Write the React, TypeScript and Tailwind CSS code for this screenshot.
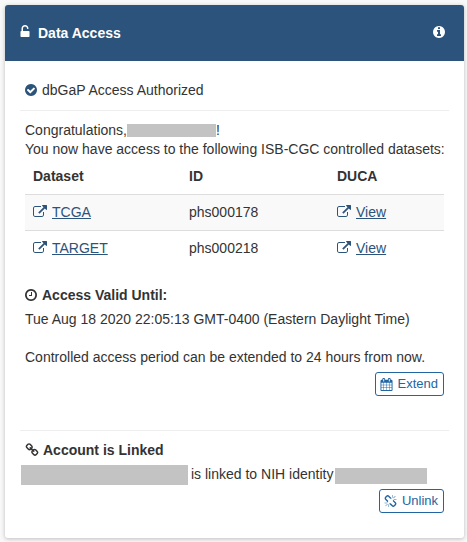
import type { ReactNode } from "react";

const ICONS = {
  unlock:
    "M1376 768q40 0 68 28t28 68v576q0 40-28 68t-68 28h-960q-40 0-68-28t-28-68v-576q0-40 28-68t68-28h32v-320q0-185 131.5-316.5t316.5-131.5 316.5 131.5 131.5 316.5q0 26-19 45t-45 19h-64q-26 0-45-19t-19-45q0-106-75-181t-181-75-181 75-75 181v320h736z",
  info: "M1152 1376v-160q0-14-9-23t-23-9h-96v-512q0-14-9-23t-23-9h-320q-14 0-23 9t-9 23v160q0 14 9 23t23 9h96v320h-96q-14 0-23 9t-9 23v160q0 14 9 23t23 9h448q14 0 23-9t9-23zm-128-896v-160q0-14-9-23t-23-9h-192q-14 0-23 9t-9 23v160q0 14 9 23t23 9h192q14 0 23-9t9-23zm640 416q0 209-103 385.5t-279.5 279.5-385.5 103-385.5-103-279.5-279.5-103-385.5 103-385.5 279.5-279.5 385.5-103 385.5 103 279.5 279.5 103 385.5z",
  check:
    "M1412 734q0-28-18-46l-91-90q-19-19-45-19t-45 19l-408 407-226-226q-19-19-45-19t-45 19l-91 90q-18 18-18 46 0 27 18 45l362 362q19 19 45 19 27 0 46-19l543-543q18-18 18-45zm252 162q0 209-103 385.5t-279.5 279.5-385.5 103-385.5-103-279.5-279.5-103-385.5 103-385.5 279.5-279.5 385.5-103 385.5 103 279.5 279.5 103 385.5z",
  external:
    "M1408 928v320q0 119-84.5 203.5t-203.5 84.5h-832q-119 0-203.5-84.5t-84.5-203.5v-832q0-119 84.5-203.5t203.5-84.5h704q14 0 23 9t9 23v64q0 14-9 23t-23 9h-704q-66 0-113 47t-47 113v832q0 66 47 113t113 47h832q66 0 113-47t47-113v-320q0-14 9-23t23-9h64q14 0 23 9t9 23zm384-864v512q0 26-19 45t-45 19-45-19l-176-176-652 652q-10 10-23 10t-23-10l-114-114q-10-10-10-23t10-23l652-652-176-176q-19-19-19-45t19-45 45-19h512q26 0 45 19t19 45z",
  clock:
    "M1024 544v448q0 14-9 23t-23 9h-320q-14 0-23-9t-9-23v-64q0-14 9-23t23-9h224v-352q0-14 9-23t23-9h64q14 0 23 9t9 23zm416 352q0-148-73-273t-198-198-273-73-273 73-198 198-73 273 73 273 198 198 273 73 273-73 198-198 73-273zm224 0q0 209-103 385.5t-279.5 279.5-385.5 103-385.5-103-279.5-279.5-103-385.5 103-385.5 279.5-279.5 385.5-103 385.5 103 279.5 279.5 103 385.5z",
  calendar:
    "M192 1664h288v-288h-288v288zm352 0h320v-288h-320v288zm-352-352h288v-320h-288v320zm352 0h320v-320h-320v320zm-352-384h288v-288h-288v288zm736 736h320v-288h-320v288zm-384-736h320v-288h-320v288zm768 736h288v-288h-288v288zm-384-352h320v-320h-320v320zm-352-864v-288q0-13-9.5-22.5t-22.5-9.5h-64q-13 0-22.5 9.5t-9.5 22.5v288q0 13 9.5 22.5t22.5 9.5h64q13 0 22.5-9.5t9.5-22.5zm736 864h288v-320h-288v320zm-384-384h320v-288h-320v288zm384 0h288v-288h-288v288zm32-480v-288q0-13-9.5-22.5t-22.5-9.5h-64q-13 0-22.5 9.5t-9.5 22.5v288q0 13 9.5 22.5t22.5 9.5h64q13 0 22.5-9.5t9.5-22.5zm384-64v1280q0 52-38 90t-90 38h-1408q-52 0-90-38t-38-90v-1280q0-52 38-90t90-38h128v-96q0-66 47-113t113-47h64q66 0 113 47t47 113v96h384v-96q0-66 47-113t113-47h64q66 0 113 47t47 113v96h128q52 0 90 38t38 90z",
  link: "M1520 1216q0-40-28-68l-208-208q-28-28-68-28-42 0-72 32 3 3 19 18.5t21.5 21.5 15 19 13 25.5 3.5 27.5q0 40-28 68t-68 28q-15 0-27.5-3.5t-25.5-13-19-15-21.5-21.5-18.5-19q-33 31-33 73 0 40 28 68l206 207q27 27 68 27 40 0 68-26l147-146q28-28 28-67zm-703-705q0-40-28-68l-206-207q-28-28-68-28-39 0-68 27l-147 146q-28 28-28 67 0 40 28 68l208 208q27 27 68 27 42 0 72-31-3-3-19-18.5t-21.5-21.5-15-19-13-25.5-3.5-27.5q0-40 28-68t68-28q15 0 27.5 3.5t25.5 13 19 15 21.5 21.5 18.5 19q33-31 33-73zm895 705q0 120-85 203l-147 146q-83 83-203 83-121 0-204-85l-206-207q-83-83-83-203 0-123 88-209l-88-88q-86 88-208 88-120 0-204-84l-208-208q-84-84-84-204t85-203l147-146q83-83 203-83 121 0 204 85l206 207q83 83 83 203 0 123-88 209l88 88q86-88 208-88 120 0 204 84l208 208q84 84 84 204z",
  unlink:
    "M503 1271l-256 256q-10 9-23 9-12 0-23-9-9-10-9-23t9-23l256-256q10-9 23-9t23 9q9 10 9 23t-9 23zm169 41v320q0 14-9 23t-23 9-23-9-9-23v-320q0-14 9-23t23-9 23 9 9 23zm-224-224q0 14-9 23t-23 9h-320q-14 0-23-9t-9-23 9-23 23-9h320q14 0 23 9t9 23zm1264 128q0 120-85 203l-147 146q-83 83-203 83-121 0-204-85l-334-335q-21-21-42-56l239-18 273 274q28 28 68 27.5t68-27.5l147-146q28-28 28-67 0-40-28-68l-274-275 18-239q35 21 56 42l336 336q84 86 84 204zm-617-724l-239 18-273-274q-28-28-68-28-39 0-68 27l-147 146q-28 28-28 67 0 40 28 68l274 274-18 240q-35-21-56-42l-336-336q-84-86-84-204 0-120 85-203l147-146q83-83 203-83 121 0 204 85l334 335q21 21 42 56zm633 84q0 14-9 23t-23 9h-320q-14 0-23-9t-9-23 9-23 23-9h320q14 0 23 9t9 23zm-544-544v320q0 14-9 23t-23 9-23-9-9-23v-320q0-14 9-23t23-9 23 9 9 23zm407 151l-256 256q-11 9-23 9t-23-9q-9-10-9-23t9-23l256-256q10-9 23-9t23 9q9 10 9 23t-9 23z",
};

function Icon({ name, className = "size-3.5 mb-px" }: { name: keyof typeof ICONS; className?: string }) {
  return (
    <svg viewBox="0 0 1792 1792" fill="currentColor" aria-hidden="true" className={`shrink-0 ${className}`}>
      <path d={ICONS[name]} />
    </svg>
  );
}

function DatasetLink({ children }: { children: ReactNode }) {
  return (
    <a href="#" className="flex items-center gap-[5px] text-[#2c537b]">
      <Icon name="external" />
      <span className="underline">{children}</span>
    </a>
  );
}

function ActionButton({ icon, children }: { icon: keyof typeof ICONS; children: ReactNode }) {
  return (
    <button className="flex h-6 items-center gap-[4.5px] rounded-[3px] border border-[#2265a3] bg-white pr-[5px] pl-[4.5px] text-[13px] text-[#2265a3]">
      <Icon name={icon} className="size-[13px]" />
      <span className="mb-0.5">{children}</span>
    </button>
  );
}

const datasets = [
  { name: "TCGA", id: "phs000178" },
  { name: "TARGET", id: "phs000218" },
];

export default function App() {
  return (
    <div className="h-[542px] w-[467px] overflow-hidden bg-[#f8f8f8] pt-[5px] pl-[5px] font-['Liberation_Sans',Arial,sans-serif] text-sm leading-[19px] text-[#333]">
      <section className="h-[533px] w-[459px] rounded-[3px] bg-white shadow-[0_1px_4px_rgba(0,0,0,0.24)]">
        <header className="flex h-14 items-center justify-between rounded-t-[3px] bg-[#2c537b] pr-[18.5px] pl-[12.5px] text-white">
          <h1 className="flex items-center gap-[6.5px] leading-5 font-bold">
            <Icon name="unlock" className="mb-0.5 size-3.5" />
            Data Access
          </h1>
          <Icon name="info" className="mb-0.5 size-3.5" />
        </header>

        <div className="px-[15px] pt-5">
          <p className="flex items-center gap-1 pb-[10px] pl-1">
            <Icon name="check" className="mb-px size-3.5 text-[#2c537b]" />
            dbGaP Access Authorized
          </p>
          <hr className="border-[#eee]" />

          <div className="px-[5px] pt-[10px]">
            <p className="flex items-center">
              Congratulations,
              <span className="h-[13px] w-[89px] bg-[#c3c3c3]" />!
            </p>
            <p className="whitespace-nowrap">You now have access to the following ISB-CGC controlled datasets:</p>
            <table className="w-[419px] table-fixed text-left">
              <thead>
                <tr>
                  <th className="w-[156px] p-2">Dataset</th>
                  <th className="w-[148px] p-2">ID</th>
                  <th className="p-2">DUCA</th>
                </tr>
              </thead>
              <tbody>
                {datasets.map((dataset) => (
                  <tr key={dataset.id} className="border-t border-[#ddd] odd:bg-[#f9f9f9]">
                    <td className="p-2">
                      <DatasetLink>{dataset.name}</DatasetLink>
                    </td>
                    <td className="p-2">{dataset.id}</td>
                    <td className="p-2">
                      <DatasetLink>View</DatasetLink>
                    </td>
                  </tr>
                ))}
              </tbody>
            </table>

            <h2 className="mt-5 -ml-px flex items-center gap-1 font-bold">
              <Icon name="clock" />
              Access Valid Until:
            </h2>
            <p className="mt-[5px]">Tue Aug 18 2020 22:05:13 GMT-0400 (Eastern Daylight Time)</p>
            <p className="mt-[19px]">Controlled access period can be extended to 24 hours from now.</p>
            <div className="mt-[5px] flex justify-end">
              <ActionButton icon="calendar">Extend</ActionButton>
            </div>
          </div>

          <hr className="mt-[34px] border-[#eee]" />

          <div className="px-[5px] pt-[10px]">
            <h2 className="-ml-[0.5px] flex items-center gap-[4.5px] font-bold">
              <Icon name="link" />
              Account is Linked
            </h2>
            <p className="mt-[5px] -ml-1 flex h-5 items-start whitespace-pre">
              <span className="h-5 w-[167px] bg-[#c3c3c3]" />
              <span className="ml-[3px] leading-[18px]">is linked to NIH identity</span>
              <span className="mt-[3px] ml-0.5 h-4 w-[92px] bg-[#c3c3c3]" />
            </p>
            <div className="mt-1 flex justify-end">
              <ActionButton icon="unlink">Unlink</ActionButton>
            </div>
          </div>
        </div>
      </section>
    </div>
  );
}
